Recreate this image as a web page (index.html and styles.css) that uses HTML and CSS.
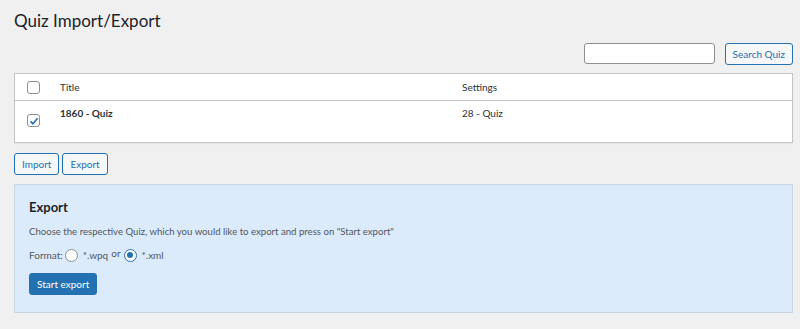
FILE: index.html
```html
<!DOCTYPE html>
<html>
<head>
<meta charset="utf-8">
<link rel="stylesheet" href="styles.css">
</head>
<body>
<div class="wrap">
  <h1 class="page-title">Quiz Import/Export</h1>
  <div class="search-row">
    <input class="search-input" type="text">
    <button class="btn">Search Quiz</button>
  </div>
  <div class="table">
    <div class="row head">
      <div class="cell cb"><span class="check"></span></div>
      <div class="cell title">Title</div>
      <div class="cell settings">Settings</div>
    </div>
    <div class="row body">
      <div class="cell cb"><span class="check checked"><svg viewBox="0 0 12 12" width="12" height="12"><path d="M2.5 6.3 L4.9 8.7 L9.6 3.2" fill="none" stroke="#2271b1" stroke-width="1.7"/></svg></span></div>
      <div class="cell title"><strong>1860 - Quiz</strong></div>
      <div class="cell settings">28 - Quiz</div>
    </div>
  </div>
  <div class="actions">
    <button class="btn">Import</button>
    <button class="btn">Export</button>
  </div>
  <div class="panel">
    <h2 class="panel-title">Export</h2>
    <p class="desc">Choose the respective Quiz, which you would like to export and press on "Start export"</p>
    <div class="format">
      <span>Format:</span>
      <span class="radio"></span>
      <span class="opt">*.wpq</span>
      <span class="or">or</span>
      <span class="radio on"></span>
      <span class="opt">*.xml</span>
    </div>
    <button class="btn-primary">Start export</button>
  </div>
</div>
</body>
</html>
```

FILE: styles.css
```css
* { box-sizing: border-box; }
html, body { margin: 0; padding: 0; }
body {
  background: #f0f0f1;
  font-family: "Lato", "Open Sans", sans-serif;
  font-size: 10px;
  color: #3c434a;
  width: 800px;
  height: 329px;
  overflow: hidden;
}
.wrap { padding: 0 7px 0 14px; }
.page-title {
  margin: 0;
  padding-top: 9px;
  font-size: 17px;
  font-weight: 400;
  color: #1d2327;
  line-height: 24px;
}
.search-row {
  display: flex;
  justify-content: flex-end;
  gap: 10px;
  margin-top: 10px;
  height: 22px;
}
.search-input {
  width: 131px;
  height: 21px;
  border: 1px solid #8c8f94;
  border-radius: 3px;
  background: #fff;
  margin: 0;
}
.btn {
  font-family: inherit;
  font-size: 10px;
  color: #2271b1;
  background: #f6f7f7;
  border: 1px solid #2271b1;
  border-radius: 3px;
  height: 22px;
  padding: 0 7px;
  margin: 0;
  line-height: 20px;
}
.table {
  margin-top: 8px;
  background: #fff;
  border: 1px solid #c3c4c7;
  box-shadow: 0 1px 1px rgba(0,0,0,.04);
  height: 70px;
}
.row { display: flex; }
.row.head { height: 27px; border-bottom: 1px solid #c3c4c7; align-items: center; }
.row.body { height: 41px; align-items: flex-start; }
.cell { color: #2c3338; }
.cb { width: 45px; padding-left: 12px; display: flex; }
.body .cb { padding-top: 13px; }
.title { width: 402px; }
.body .title, .body .settings { padding-top: 6px; }
.body .title strong { font-weight: 700; color: #2c3338; }
.check {
  display: inline-block;
  width: 13px;
  height: 13px;
  border: 1px solid #8c8f94;
  border-radius: 3px;
  background: #fff;
  position: relative;
}
.check svg { position: absolute; left: 0; top: 0; }
.actions {
  display: flex;
  gap: 3px;
  margin-top: 10px;
}
.panel {
  margin-top: 9px;
  background: #dcebfc;
  border: 1px solid #c9d6e5;
  height: 129px;
  padding: 13px 14px;
}
.panel-title {
  margin: 0;
  font-size: 13px;
  font-weight: 700;
  color: #1d2327;
  line-height: 18px;
}
.desc { margin: 9px 0 0; line-height: 14px; color: #50575e; font-size: 9.6px; }
.format {
  display: flex;
  align-items: center;
  margin-top: 9px;
  color: #50575e;
  height: 14px;
}
.radio {
  display: inline-block;
  width: 13px;
  height: 13px;
  border: 1px solid #8c8f94;
  border-radius: 50%;
  background: #fff;
  margin-left: 2px;
  position: relative;
}
.radio.on { border-color: #2271b1; }
.radio.on::after {
  content: "";
  position: absolute;
  left: 2.5px; top: 2.5px;
  width: 6px; height: 6px;
  border-radius: 50%;
  background: #2271b1;
}
.opt { margin-left: 5px; }
.or { margin-left: 3px; margin-right: 1px; position: relative; top: -2px; }
.btn-primary {
  display: block;
  margin-top: 11px;
  font-family: inherit;
  font-size: 10px;
  color: #fff;
  background: #2271b1;
  border: 1px solid #2271b1;
  border-radius: 3px;
  height: 22px;
  padding: 0 7px;
}
```
